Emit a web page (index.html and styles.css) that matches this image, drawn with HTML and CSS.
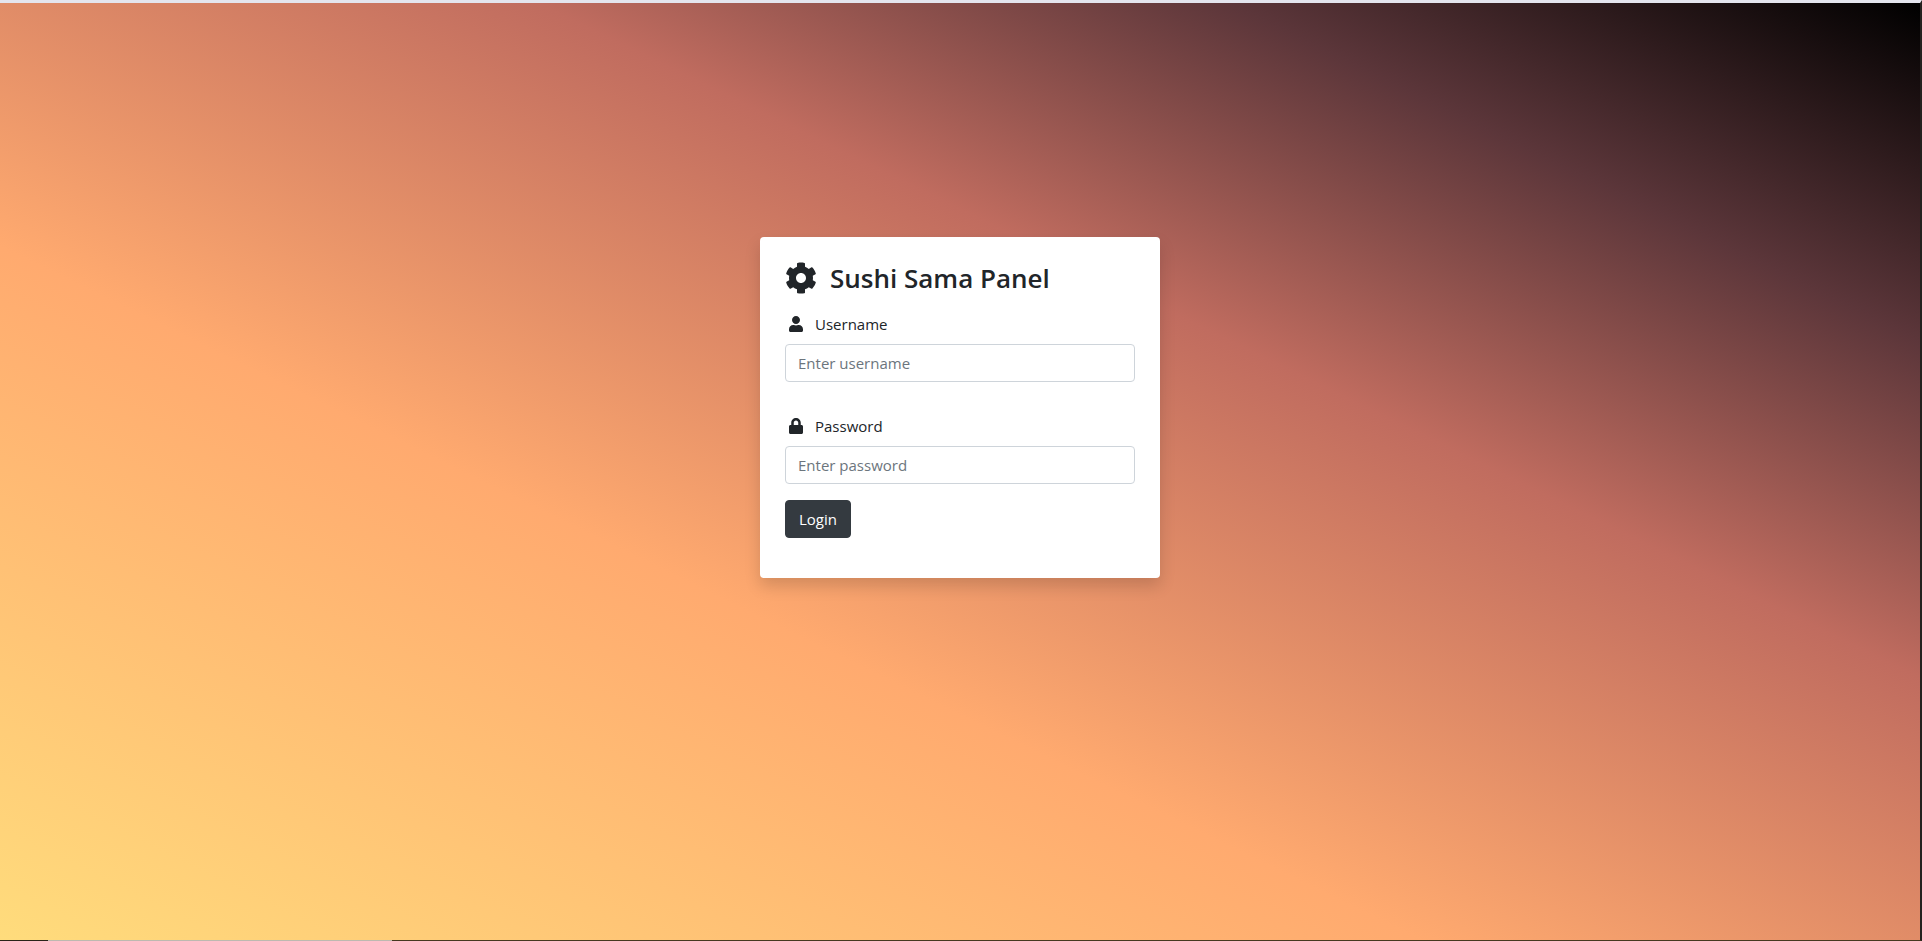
FILE: index.html
```html
<!DOCTYPE html>
<html lang="en">
<head>
<meta charset="utf-8">
<title>Sushi Sama Panel</title>
<link rel="stylesheet" href="styles.css">
</head>
<body>
<main class="page">
  <form class="card">
    <h1 class="title">
      <svg class="title-icon" viewBox="0 0 512 512" aria-hidden="true"><path d="M487.4 315.7l-42.6-24.6c4.3-23.2 4.3-47 0-70.2l42.6-24.6c4.900-2.800 7.100-8.600 5.500-14-11.100-35.600-30-67.800-54.700-94.600-3.800-4.100-10-5.100-14.800-2.300L380.800 110c-17.900-15.400-38.500-27.300-60.800-35.100V25.800c0-5.600-3.900-10.500-9.400-11.700-36.700-8.200-74.300-7.800-109.200 0-5.500 1.200-9.400 6.100-9.400 11.700V75c-22.200 7.900-42.800 19.800-60.800 35.100L88.700 85.500c-4.900-2.800-11-1.900-14.800 2.300-24.700 26.700-43.600 58.900-54.700 94.600-1.700 5.400.6 11.200 5.500 14L67.300 221c-4.300 23.200-4.300 47 0 70.200l-42.600 24.600c-4.900 2.800-7.100 8.600-5.500 14 11.100 35.600 30 67.800 54.700 94.600 3.800 4.100 10 5.100 14.800 2.300l42.600-24.600c17.900 15.400 38.500 27.300 60.800 35.100v49.200c0 5.600 3.900 10.500 9.400 11.700 36.700 8.200 74.300 7.800 109.200 0 5.500-1.200 9.400-6.100 9.400-11.700v-49.200c22.200-7.900 42.800-19.800 60.800-35.100l42.600 24.600c4.900 2.800 11 1.900 14.800-2.300 24.700-26.700 43.600-58.900 54.700-94.600 1.500-5.500-.7-11.300-5.600-14.100zM256 336c-44.100 0-80-35.900-80-80s35.900-80 80-80 80 35.900 80 80-35.900 80-80 80z"/></svg>
      Sushi Sama Panel
    </h1>
    <div class="field">
      <label class="label" for="username">
        <svg class="label-icon" viewBox="0 0 448 512" aria-hidden="true"><path d="M224 256c70.700 0 128-57.300 128-128S294.700 0 224 0 96 57.300 96 128s57.300 128 128 128zm89.600 32h-16.700c-22.200 10.200-46.900 16-72.900 16s-50.600-5.800-72.900-16h-16.700C60.200 288 0 348.200 0 422.400V464c0 26.500 21.500 48 48 48h352c26.500 0 48-21.500 48-48v-41.600c0-74.200-60.200-134.400-134.400-134.400z"/></svg>
        Username
      </label>
      <input class="input" id="username" type="text" placeholder="Enter username">
    </div>
    <div class="field">
      <label class="label" for="password">
        <svg class="label-icon" viewBox="0 0 448 512" aria-hidden="true"><path d="M400 224h-24v-72C376 68.200 307.800 0 224 0S72 68.200 72 152v72H48c-26.500 0-48 21.500-48 48v192c0 26.500 21.500 48 48 48h352c26.500 0 48-21.500 48-48V272c0-26.500-21.500-48-48-48zm-104 0H152v-72c0-39.700 32.300-72 72-72s72 32.300 72 72v72z"/></svg>
        Password
      </label>
      <input class="input" id="password" type="password" placeholder="Enter password">
    </div>
    <button class="button" type="submit">Login</button>
  </form>
</main>
</body>
</html>
```

FILE: styles.css
```css
* {
  box-sizing: border-box;
}

body {
  margin: 0;
  font: 15px/24px "Open Sans", "Noto Sans", sans-serif;
  color: #212529;
}

.page {
  min-height: 100vh;
  display: flex;
  justify-content: center;
  align-items: flex-start;
  padding-top: 234px;
  border-top: 3px solid #e4e5ee;
  border-right: 2px solid #24221f;
  border-bottom: 1px solid transparent;
  background:
    linear-gradient(to right, #2a2318 48px, #bdb9b0 48px 392px, #46381f 392px) bottom / 100% 1px no-repeat border-box,
    linear-gradient(to top right, #ffdc7c, #ffaa6f 37%, #c06c5f 64%, #5c363a 82%, #000) padding-box;
}

.card {
  width: 400px;
  padding: 24px 25px 40px;
  border-radius: 4px;
  background: #fff;
  box-shadow: 0 8px 16px rgba(0, 0, 0, 0.15);
}

.title {
  display: flex;
  align-items: center;
  gap: 13px;
  margin: 0 0 17px;
  font-size: 26px;
  line-height: 34px;
  font-weight: 600;
}

.title-icon {
  width: 32px;
  height: 32px;
  fill: currentColor;
}

.label {
  display: flex;
  align-items: center;
  gap: 12px;
  margin-bottom: 8px;
  padding-left: 4px;
}

.label-icon {
  width: 14px;
  height: 16px;
  fill: currentColor;
}

.field + .field {
  margin-top: 32px;
}

.input {
  display: block;
  width: 100%;
  height: 38px;
  padding: 6px 12px;
  border: 1px solid #ced4da;
  border-radius: 4px;
  background: #fff;
  color: #495057;
  font: inherit;
}

.input::placeholder {
  color: #6c757d;
  opacity: 1;
}

.button {
  height: 38px;
  margin-top: 16px;
  padding: 0 13px;
  border: 1px solid #343a40;
  border-radius: 4px;
  background: #343a40;
  color: #fff;
  font: inherit;
}
```
